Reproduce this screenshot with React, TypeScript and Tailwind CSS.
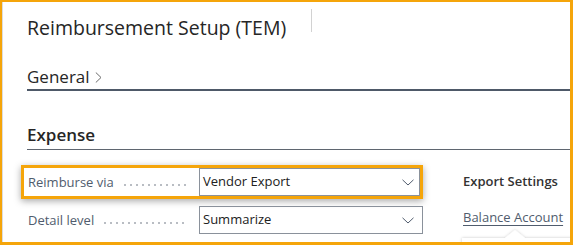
import React from "react";

const Chevron = () => (
  <svg width="12" height="7" viewBox="0 0 12 7" className="shrink-0">
    <path d="M0.5 0.8 L6 6 L11.5 0.8" fill="none" stroke="#505c6d" strokeWidth="1" />
  </svg>
);

const Leader = () => (
  <div className="flex-1 h-[2px] mt-[5px] mr-[11px] ml-[10px] bg-[radial-gradient(circle_at_1px_1px,#b9bdc3_0.8px,transparent_1.1px)] bg-[length:6px_2px] bg-repeat-x" />
);

export default function App() {
  return (
    <div className="w-[573px] h-[245px] bg-white border-[#F5A50A] border-t-2 border-l-2 border-r-[3px] border-b-[3px] relative overflow-hidden font-['Open_Sans','Noto_Sans',sans-serif]">
      <div className="h-full border-l border-[#dcdcdc] pl-[24px]">
        {/* Header */}
        <div className="flex items-start pt-[7px]">
          <div className="mt-[5px] text-[19.5px] leading-[28px] text-[#262626] whitespace-nowrap">
            Reimbursement Setup (TEM)
          </div>
          <div className="ml-[25px] w-px h-[23px] bg-[#d2d2d2]" />
        </div>

        {/* General */}
        <div className="mt-[23px] border-b-2 border-[#4e5968] flex items-center">
          <span className="text-[17px] leading-[24px] text-[#262626]">General</span>
          <svg width="7" height="11" viewBox="0 0 7 11" className="ml-[5px] mt-[1px]">
            <path d="M0.8 0.5 L6 5.5 L0.8 10.5" fill="none" stroke="#6b6b6b" strokeWidth="1" />
          </svg>
        </div>

        {/* Expense */}
        <div className="mt-[32px] pb-[2px] border-b border-[#5f6670]">
          <span className="text-[17px] leading-[24px] font-semibold text-[#262626]">Expense</span>
        </div>

        {/* Fields */}
        <div className="mt-[15px] flex items-start">
          <div className="ml-[-6px] w-[402px] flex flex-col">
            <div className="h-[34px] border-[3px] border-[#F5A50A] flex items-center shadow-[0_2px_7px_rgba(0,0,0,0.35)]">
              <div className="w-[175px] pl-[4px] flex items-center">
                <span className="text-[13px] leading-[18px] text-[#505c6d] whitespace-nowrap">Reimburse via</span>
                <Leader />
              </div>
              <div className="w-[221px] h-[28px] border border-[#8a919b] flex items-center justify-between pl-[3px] pr-[5px]">
                <span className="text-[13px] text-[#212121] whitespace-nowrap">Vendor Export</span>
                <Chevron />
              </div>
            </div>
            <div className="mt-[4px] h-[34px] border-[3px] border-transparent flex items-center">
              <div className="w-[175px] pl-[4px] flex items-center">
                <span className="text-[13px] leading-[18px] text-[#505c6d] whitespace-nowrap">Detail level</span>
                <Leader />
              </div>
              <div className="w-[224px] mr-[-3px] h-[28px] border border-[#8a919b] flex items-center justify-between pl-[3px] pr-[8px]">
                <span className="text-[13px] text-[#212121] whitespace-nowrap">Summarize</span>
                <Chevron />
              </div>
            </div>
          </div>

          <div className="ml-[40px] flex flex-col">
            <div className="h-[34px] flex items-center text-[13px] font-semibold text-[#333333] whitespace-nowrap">
              Export Settings
            </div>
            <div className="mt-[8px] leading-[20px] text-[13px] text-[#505c6d] underline underline-offset-[3px] whitespace-nowrap">
              Balance Account
            </div>
          </div>
        </div>
      </div>

      {/* Callout beneath Balance Account */}
      <svg
        width="122"
        height="24"
        viewBox="0 0 122 24"
        className="absolute left-[453px] top-[224px]"
      >
        <defs>
          <filter id="sh" x="-20%" y="-60%" width="140%" height="220%">
            <feDropShadow dx="0" dy="0" stdDeviation="1.6" floodColor="#000" floodOpacity="0.22" />
          </filter>
        </defs>
        <path d="M7 12 H50 L60 4 L70 12 H124 V30 H7 Z" fill="#ffffff" filter="url(#sh)" />
      </svg>
    </div>
  );
}
